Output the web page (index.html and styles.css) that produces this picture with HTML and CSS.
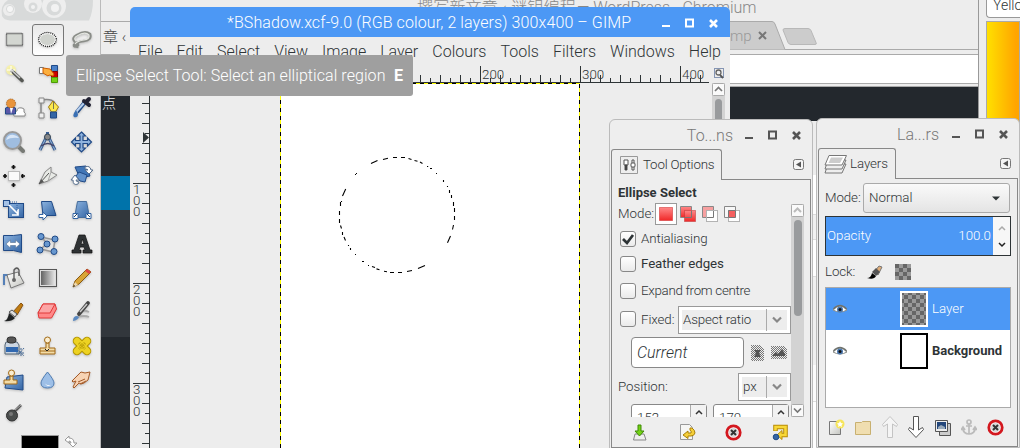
FILE: index.html
```html
<!DOCTYPE html>
<html lang="en">
<head>
<meta charset="utf-8">
<title>GIMP</title>
<link rel="stylesheet" href="styles.css">
</head>
<body>
<svg width="0" height="0" class="defs" aria-hidden="true">
  <defs>
    <linearGradient id="blue" x1="0" y1="0" x2="1" y2="1"><stop offset="0" stop-color="#8db4e0"/><stop offset="1" stop-color="#3465a4"/></linearGradient>
    <linearGradient id="grey" x1="0" y1="0" x2="1" y2="0"><stop offset="0" stop-color="#555"/><stop offset="1" stop-color="#f4f4f4"/></linearGradient>
    <linearGradient id="soft" x1="0" y1="0" x2="1" y2="1"><stop offset="0" stop-color="#fff"/><stop offset="1" stop-color="#c4c5c0"/></linearGradient>
    <linearGradient id="red" x1="0" y1="0" x2="0" y2="1"><stop offset="0" stop-color="#f88"/><stop offset="1" stop-color="#f02828"/></linearGradient>
    <pattern id="check" width="8" height="8" patternUnits="userSpaceOnUse"><rect width="8" height="8" fill="#999"/><path d="M0 0h4v4H0zM4 4h4v4H4z" fill="#666"/></pattern>
    <pattern id="dots" width="2" height="2" patternUnits="userSpaceOnUse"><path d="M0 0h1v1H0zM1 1h1v1H1z" fill="#777"/></pattern>
    <pattern id="hticks" width="100" height="17" patternUnits="userSpaceOnUse" x="30"><path d="M.5 0V17M10.5 12v5M20.5 9v8M30.5 12v5M40.5 9v8M50.5 12v5M60.5 9v8M70.5 12v5M80.5 9v8M90.5 12v5" stroke="#2e3436"/></pattern>
    <pattern id="vticks" width="20" height="100" patternUnits="userSpaceOnUse" y="0"><path d="M3 .5H20M15 10.5h5M12 20.5h8M15 30.5h5M12 40.5h8M15 50.5h5M12 60.5h8M15 70.5h5M12 80.5h8M15 90.5h5" stroke="#2e3436"/></pattern>
    <g id="stop"><circle cx="8.500" cy="8.500" r="6.700" fill="#fff" stroke="#d3181f" stroke-width="2.800"/><circle cx="8.500" cy="8.500" r="4.600" fill="#d8d8d8"/><path d="M6 6l5 5M11 6l-5 5" stroke="#333" stroke-width="2"/></g>
    <g id="eye"><path d="M1 7Q8-1 15 7Q8 11 1 7z" fill="#fff" stroke="#8a8d88"/><path d="M1.500 6Q8-1 14.500 6" fill="none" stroke="#70736e" stroke-width="1.600"/><circle cx="8" cy="6.500" r="3" fill="#4a78b0"/><circle cx="8" cy="6.500" r="1.500" fill="#111"/></g>
    <g id="winbtns" fill="none" stroke="currentColor" stroke-width="2"><path d="M0 10h8M31 3.500h-7v7h7z" stroke-width="2"/><path d="M48 4l7 7M55 4l-7 7" stroke-width="2.600"/></g>
    <g id="menuarrow"><rect x=".5" y=".5" width="10" height="10" rx="2" fill="#f5f5f5" stroke="#777"/><path d="M8 2.500v6L3 5.500z" fill="#555"/></g>
  </defs>
</svg>

<div class="desktop">
  <section class="browser">
    <div class="browser-title"><span class="cjk">撰写新文章 ‹ 谜钥编程</span><span>— WordPress - Chromium</span></div>
    <div class="tabs">
      <span class="tab-left">章 ‹</span>
      <span class="tab-right">mp</span>
      <svg class="tab-shapes" width="110" height="29"><path d="M0 .500H42Q44 .500 45 3L55 28.500H0z" fill="#ccc"/><path d="M0 .500H42Q44 .500 45 3L55 28.500" fill="none" stroke="#aaa"/><path d="M29 11l7 7M36 11l-7 7" stroke="#777" stroke-width="2"/><path d="M55 7.500h23q2 0 3 2l5 12q1 2-1 2H61q-2 0-3-2L53 9q0-1.500 2-1.500z" fill="#ccc" stroke="#b8b8b8"/></svg>
    </div>
    <div class="address"></div>
    <div class="page"><div class="page-strip"><span>点</span><i></i><b></b></div><div class="page-cards"></div></div>
  </section>

  <aside class="gradient-panel"><div class="combo-cut">Yello</div><div class="gradient"></div></aside>

  <section class="toolbox">
    <svg class="wilber" width="96" height="21"><path d="M2 16Q0 5 8 0H93Q93 12 89 20.500H10Q4 20 2 16z" fill="#d8dada"/><circle cx="9" cy="10" r="6" fill="#ededed"/><circle cx="10" cy="9" r="3.600" fill="#f6f6f6" stroke="#d8dada"/><circle cx="33" cy="4" r="9" fill="#eee"/><circle cx="33" cy="7" r="4.500" fill="#d8dada"/><circle cx="33" cy="7" r="2" fill="#f2f2f2"/><circle cx="54" cy="6" r="12" fill="#eee"/><circle cx="54" cy="8" r="7.500" fill="#d8dada"/><circle cx="55" cy="8" r="4" fill="#f2f2f2"/></svg>
    <div class="tools">
      <div class="tool"><svg><rect x="4.500" y="5.500" width="16" height="12" fill="#d3d6d1"/><rect x="4.500" y="5.500" width="16" height="12" fill="none" stroke="#fff"/><rect x="4.500" y="5.500" width="16" height="12" fill="none" stroke="#111" stroke-width="1.300" stroke-dasharray="1 1"/></svg></div>
      <div class="tool"><span class="active"><svg><ellipse cx="11.500" cy="11.500" rx="8.800" ry="7" fill="#fff" stroke="#111" stroke-width="1.300" stroke-dasharray="1 1"/><ellipse cx="11.500" cy="11.500" rx="7.500" ry="5.500" fill="#cfd2cd"/></svg></span></div>
      <div class="tool"><svg><g fill="none"><path d="M5 14Q1 10 7 7Q15 2 20 6Q22 12 14 13Q6 14 4 17Q4 20 8 17Q8 14 5 15M8 14l-1 6" stroke="#8a8d88" stroke-width="2.600"/><path d="M6 13Q3 10 7 8Q15 3 19 7Q20 11 14 12Q7 13 5 16" stroke="#e4e6e1" stroke-width="1.200"/></g></svg></div>

      <div class="tool"><svg><circle cx="9" cy="8" r="5" fill="#fcf6a0" opacity=".8"/><path d="M10 9L20 18.500" stroke="#555753" stroke-width="3.600" stroke-linecap="round"/><path d="M10 8.500l8 7.500" stroke="#ccc" stroke-width="1.500"/><path d="M9 4v8M5 8h8" stroke="#fff"/></svg></div>
      <div class="tool"><svg><path d="M15.500 3.500h6v6h-6z" fill="#4a80c8" stroke="#204a87"/><path d="M15.500 9.500h6v6h-6z" fill="#cc0000" stroke="#800"/><path d="M15.500 15.500h6v5h-6z" fill="#73d216" stroke="#4e9a06"/><path d="M3.500 5.500h4v6h-4z" fill="#fff" stroke="#777"/><path d="M7 6l7 1 4 5-1 2-4-1-1 1-5-3z" fill="#fcaf3e" stroke="#ce5c00"/></svg></div>
      <div class="tool"></div>

      <div class="tool"><svg><path d="M12 20q-2-4 3-5q0-4 5-3q3 0 2 4q2 1 1 4z" fill="#fff" stroke="#888"/><path d="M3.500 18V12q5-3 10 0v6z" fill="#5b58a8" stroke="#204a87"/><circle cx="9" cy="7.500" r="4.500" fill="#e8943c" stroke="#a65a12" stroke-dasharray="1 1"/><path d="M8 12l1 6 2-6z" fill="#fff"/></svg></div>
      <div class="tool"><svg><path d="M5 4v16M5 4q14-2 14 5" fill="none" stroke="#888" stroke-width="1.500"/><path d="M3 2h5v5H3zM3 17h5v5H3z" fill="#eee" stroke="#888"/><path d="M17 5l-4.500 6 3 5h4l3-5z" fill="#fce94f" stroke="#a07c10"/><path d="M17.500 6v7" stroke="#775"/><path d="M14.500 16h6v6h-6z" fill="#3465a4" stroke="#204a87"/></svg></div>
      <div class="tool"><svg><path d="M15 6l-8 10" stroke="#204a87" stroke-width="4"/><path d="M14 7l-8 9" stroke="#b8d0ee" stroke-width="2"/><path d="M14 5l5 4M16 6l3-3" stroke="#223" stroke-width="4" stroke-linecap="round"/><path d="M6 14q-4 5-2 7 4 1 4-3z" fill="#3a70b4"/></svg></div>

      <div class="tool"><svg><path d="M15 15l6 6" stroke="#777a75" stroke-width="4" stroke-linecap="round"/><circle cx="10.500" cy="10.500" r="8.500" fill="#9fbde0" stroke="#999" stroke-width="2"/><path d="M4 10q2-6 8-5 4 1 5 3-8-1-13 2z" fill="#d8e6f6"/></svg></div>
      <div class="tool"><svg><path d="M11.500 2v4M10 8L4 20M13 8l6 12" stroke="#3a5f94" stroke-width="3"/><path d="M10 8L4 20M13 8l6 12" stroke="#9db9db"/><path d="M5 16q7-5 13 0" fill="none" stroke="#446" stroke-width="1.500"/><circle cx="11.500" cy="7" r="3" fill="#888" stroke="#345"/></svg></div>
      <div class="tool"><svg><path d="M11.500 2l4 4h-2.500v4.500h4.500V8l4 4-4 4v-2.500h-4.500v4.500h2.500l-4 4-4-4h2.500v-4.500h-4.500V16l-4-4 4-4v2.500h4.500V6h-2.500z" fill="#8fb3de" stroke="#204a87" stroke-width="1.200"/></svg></div>

      <div class="tool"><svg><rect x="6.500" y="7.500" width="11" height="9" fill="#fafafa" stroke="#bbb"/><path d="M11.500 1v4M9.500 3h4M11.500 19v4M9.500 21h4M1 12h4M3 10v4M19 12h4M20.500 10v4" stroke="#111" stroke-width="1.700"/></svg></div>
      <div class="tool"><svg><path d="M3 20L9 8l6-5v5l6 3-9 6z" fill="#e8eae6" stroke="#888"/><path d="M15 8l-3 9" stroke="#aaa"/><path d="M3 20L13 9" stroke="#555"/><path d="M3 20l2-5 3 3z" fill="#555"/></svg></div>
      <div class="tool"><svg><path d="M5 3l11-1 4 10-10 2z" fill="#4176b7" stroke="#204a87"/><path d="M9 8l8 3-2 7-5-1-4-5z" fill="#6392cb" stroke="#204a87"/><path d="M15 3q5-2 6 3h2l-4 4-4-4h3q0-1-3-1zM8 20q-5 2-5-4H1l4-5 4 5H6q0 2 3 2z" fill="#fff" stroke="#58708f"/></svg></div>

      <div class="tool"><svg><rect x="6.500" y="5.500" width="15" height="14" fill="url(#blue)" stroke="#204a87"/><rect x="1.500" y="2.500" width="6" height="6" fill="#a5c3e8" stroke="#204a87"/><path d="M7 7l9 9M16 11v6h-6" stroke="#fff" stroke-width="1.700" fill="none"/><path d="M8 4h7v8" fill="none" stroke="#3465a4" stroke-dasharray="1 1"/></svg></div>
      <div class="tool"><svg><path d="M5.500 3.500h10l4.500 14h-13z" fill="url(#blue)" stroke="#204a87"/><path d="M3 16.500h4V14l4 4-4 4v-2.500H3z" fill="#fff" stroke="#3465a4"/></svg></div>
      <div class="tool"><svg><path d="M7.500 3.500h9l3 16h-15z" fill="url(#blue)" stroke="#466d9c"/><path d="M3 15.500h5v5H3zM16 15.500h5v5h-5z" fill="#fff" stroke="#3465a4"/><path d="M4 19l3-3M20 19l-3-3" stroke="#246"/></svg></div>

      <div class="tool"><svg><path d="M1.500 3.500h10l8-1v18l-8-2h-10z" fill="url(#blue)" stroke="#204a87"/><path d="M4 12l4.500-4v2.500h5V8l4.500 4-4.500 4v-2.500h-5V16z" fill="#fff" stroke="#58708f" stroke-width=".6"/></svg></div>
      <div class="tool"><svg><path d="M5 5l14 3-2 12-12-3 6-6z" fill="none" stroke="#999" stroke-width="1.500"/><g fill="#6898d0" stroke="#204a87"><circle cx="5" cy="4.500" r="3"/><circle cx="19" cy="7" r="3"/><circle cx="11" cy="12" r="3"/><circle cx="4" cy="18" r="3"/><circle cx="18" cy="19.500" r="3"/></g></svg></div>
      <div class="tool"><svg><path d="M2 21v-3h2L9 3h6l5 15h2v3h-9v-3h2l-1-3h-4l-1 3h2v3zM11 12h3l-1.500-5z" fill="#2e3234" stroke="#111" stroke-width=".7"/></svg></div>

      <div class="tool"><svg><path d="M2 19V9h5" fill="none" stroke="#5580b8" stroke-width="2"/><path d="M5 9l11-3 6 11-13 5z" fill="url(#soft)" stroke="#777"/><path d="M12 14V4q3-4 5 0v6" fill="none" stroke="#555" stroke-width="1.300"/><circle cx="12" cy="14" r="2" fill="#666"/></svg></div>
      <div class="tool"><svg><rect x="3.500" y="3.500" width="17" height="17" fill="url(#grey)" stroke="#555"/><rect x="4.500" y="4.500" width="15" height="15" fill="none" stroke="#ddd"/></svg></div>
      <div class="tool"><svg><path d="M3 21l2-6L17 3l4 3L9 18z" fill="#d8a437" stroke="#8a5a12"/><path d="M3 21l2-5 3 3z" fill="#edd9b0"/><path d="M3 21l1-2 1 1z" fill="#000"/><path d="M15 5l2-2 4 3-2 2z" fill="#d44"/></svg></div>

      <div class="tool"><svg><path d="M11 12l8-9 2 2-6 10z" fill="#c17d11" stroke="#8a5310"/><path d="M7 12l3-2 5 4-2 3z" fill="#ddd" stroke="#555"/><path d="M2 21q4-1 5-8l6 5q-4 4-11 3z" fill="#202324"/></svg></div>
      <div class="tool"><svg><path d="M7 4h12l1.500 5-5 9H3l-1-5z" fill="#f88" stroke="#e03838"/><path d="M7 4h12l-5 9H2z" fill="#fba5a5" stroke="#e03838"/></svg></div>
      <div class="tool"><svg><path d="M7 17q8-2 12 0M9 13q4-4 10-1" fill="none" stroke="#aaa" stroke-width="1.800"/><path d="M9 14L18 3" stroke="#444" stroke-width="3.600" stroke-linecap="round"/><path d="M10 12l7-8" stroke="#ccc" stroke-width="1.500"/><path d="M3 21q0-5 4-5l2 1q-1 3-6 4z" fill="#5a88c0"/></svg></div>

      <div class="tool"><svg><path d="M4 8h11l2 3v9H3v-9z" fill="#ccd6e2" stroke="#567"/><path d="M4 13h12v5H4z" fill="#3068b0"/><rect x="5" y="3" width="9" height="6" rx="3" fill="#555" stroke="#333"/><path d="M15 15l7 7M22 14l-6 7M14 19h9M19 14v8" stroke="#446894" stroke-dasharray="2 1"/></svg></div>
      <div class="tool"><svg><path d="M10 9h3v5h6v6H4v-6h6z" fill="#f3dca7" stroke="#a26b18"/><circle cx="11.500" cy="6" r="3" fill="#fbeed0" stroke="#a26b18"/><path d="M4 17h15" stroke="#a26b18"/><path d="M9 15l2 2 2-2" stroke="#222" fill="none"/></svg></div>
      <div class="tool"><svg><path d="M7 7l10 10M17 7L7 17" stroke="#b29403" stroke-width="8.500" stroke-linecap="round"/><path d="M7 7l10 10M17 7L7 17" stroke="#edd222" stroke-width="6.500" stroke-linecap="round"/><path d="M9 9l6 6M15 9l-6 6" stroke="#bda20b" stroke-dasharray="1 1" stroke-width="3"/></svg></div>

      <div class="tool"><svg><path d="M5 9l16-2v15L3 20z" fill="url(#blue)" stroke="#204a87"/><path d="M8 8h3v4h4v4H2v-4h6z" fill="#f3dca7" stroke="#a26b18"/><circle cx="9.500" cy="5" r="3" fill="#fbeed0" stroke="#a26b18"/></svg></div>
      <div class="tool"><svg><path d="M11.500 4Q5 12 5 15q0 5 6.500 5T18 15q0-3-6.500-11z" fill="#9dbfe7" stroke="#4f7cb2"/><path d="M8 14q2 4 7 3-4 3-7-3z" fill="#fff"/></svg></div>
      <div class="tool"><svg><path d="M5 10l6-6 4 1 5-1-2 8-4 3-3 1-2-1-5 5-1-1 3-6-3 1-1-1z" fill="#f7d3b4" stroke="#a45a28"/><path d="M8 14l7-3M10 16l6-3" stroke="#a45a28"/></svg></div>

      <div class="tool"><svg><path d="M12 10l7-7" stroke="#555" stroke-width="2.600"/><path d="M13 8l6-5" stroke="#aaa"/><circle cx="10" cy="13.500" r="5.500" fill="#4a4d4c" stroke="#333"/><circle cx="9" cy="12" r="2" fill="#777"/></svg></div>
    </div>
    <div class="colours"><div class="fg"></div><svg width="14" height="12"><path d="M1 5l4-4v2q5 0 5 5h3l-4 4-4-4h2q0-2-2-2v2z" fill="#fff" stroke="#999"/></svg></div>
  </section>

  <section class="image-window">
    <header class="title-active"><span>*BShadow.xcf-9.0 (RGB colour, 2 layers) 300x400 – GIMP</span><svg width="57" height="15"><use href="#winbtns"/></svg></header>
    <nav class="menubar"><span>File</span><span>Edit</span><span>Select</span><span>View</span><span>Image</span><span>Layer</span><span>Colours</span><span>Tools</span><span>Filters</span><span>Windows</span><span>Help</span></nav>
    <div class="work">
      <div class="corner"></div>
      <svg class="hruler" width="559" height="17"><rect width="559" height="17" fill="url(#hticks)"/><path d="M0 16.500h559" stroke="#2e3436"/><text x="332" y="13">200</text><text x="432" y="13">300</text><text x="532" y="13">400</text></svg>
      <svg class="zoomfit" width="22" height="17"><rect x="5.500" y="2.500" width="9" height="9" fill="none" stroke="#1d3c78" stroke-dasharray="1 1"/><circle cx="9.500" cy="6.500" r="2.500" fill="#eee" stroke="#666" stroke-width="1.300"/><path d="M11 9l3 3" stroke="#555" stroke-width="1.800"/></svg>
      <svg class="vruler" width="20" height="365"><rect width="20" height="365" fill="url(#vticks)"/><path d="M19.500 0V365" stroke="#2e3436"/><path d="M13 49v11l6-5.500z" fill="#2e3436"/><text><tspan x="3" y="111">1</tspan><tspan x="3" y="122">0</tspan><tspan x="3" y="133">0</tspan><tspan x="3" y="211">2</tspan><tspan x="3" y="222">0</tspan><tspan x="3" y="233">0</tspan><tspan x="3" y="311">3</tspan><tspan x="3" y="322">0</tspan><tspan x="3" y="333">0</tspan></text></svg>
      <div class="canvas">
        <svg width="300" height="365" viewBox="280 83 300 365">
          <path fill="#fff" d="M280 83h300v365H280z"/>
          <path d="M280.500 448V83.500H579.500V448" fill="none" stroke="#ff0"/>
          <path d="M280.500 448V83.500H579.500V448" fill="none" stroke="#000" stroke-dasharray="4 4"/>
          <path fill="none" stroke="#000" stroke-width="1.100" d="M371 163.500L377.500 160.500M383 159.500L388 158.300M393 157.500h4M401 157.500h4M408.500 158.500l3 1M414.500 160.500l3 .8M420 162l2.500 1.500M427 166.500h1.200M430 168.500h2M436 173.500h1M443.500 180v2M447.500 186v1M449.500 190v3M451.500 195v3M453.500 202v4M454.500 208v4M454.500 216v4M453.500 225l-1 4.500M450.500 236L447.500 242.700M425 265.500L418 268.500M412 270.500l-5 1M402 272.500h-4M394 272.500h-4M387 271.800l-3-.5M379.500 269.700l-3-.8M375 267.500l-3-1M368 265.500h1M362 261.500h2M355 254.500h1M350.500 248v2M348.500 245v1M345.500 240.500l-1.500-3.500M342.500 235v-3M341.500 228.500l-1-3M339.500 223v-4M339.500 215v-4M340.500 206v-4M341.500 201v1M342.500 196L345.700 189M355 174.500h1M356 173.500h1"/>
        </svg>
      </div>
      <div class="vscroll"><svg width="13" height="13"><rect x=".5" y=".5" width="12" height="12" rx="1" fill="#fafafa" stroke="#aaa"/><path d="M3 8l3.500-3.500L10 8" fill="none" stroke="#777" stroke-width="1.700"/></svg><div class="thumb"></div></div>
    </div>
  </section>

  <div class="tooltip"><span>Ellipse Select Tool: Select an elliptical region</span><b>E</b></div>

  <section class="dock options">
    <header class="title-idle"><span>To...ns</span><svg width="57" height="15"><use href="#winbtns"/></svg></header>
    <div class="dock-frame">
      <div class="tab-row"><div class="dock-tab"><svg width="18" height="18"><path d="M.5 .5h17v17H.5z" fill="#eee" stroke="#999"/><path d="M4 4h4v5H4zM5 9h2v5H5zM12 4h2v10h-2z" fill="#fff" stroke="#555"/><path d="M5 9h2v5H5z" fill="#444"/><rect x="11" y="7" width="4" height="4" rx="1" fill="#fff" stroke="#555"/></svg><span>Tool Options</span></div><div class="tab-rest"><svg width="11" height="11"><use href="#menuarrow"/></svg></div></div>
      <div class="dock-body">
        <div class="options-view">
          <div class="options-list">
            <h2>Ellipse Select</h2>
            <div class="mode-row"><span>Mode:</span>
              <div class="mode-on"><svg width="14" height="14"><rect x=".5" y=".5" width="13" height="13" fill="url(#red)" stroke="#c22" stroke-dasharray="1 1"/></svg></div>
              <svg width="17" height="17"><path d="M.5 .5h11v11H.500z" fill="url(#red)" stroke="#888"/><path d="M4.500 4.500h11v11h-11z" fill="url(#red)" stroke="#b33" stroke-dasharray="1 1"/><path d="M5 11.500h6.500V5" fill="none" stroke="#777"/></svg>
              <svg width="17" height="17"><path d="M.5 .5h11v11H.500z" fill="#f7a0a0" stroke="#888"/><path d="M4.500 4.500h11v11h-11z" fill="#fff" stroke="#fff"/><path d="M4.500 4.500h11v11h-11z" fill="none" stroke="#666" stroke-dasharray="1 1"/><path d="M5 11.500h6.500V5" fill="none" stroke="#777"/></svg>
              <svg width="17" height="17"><path d="M.5 .5h11v11H.500z" fill="#f7f7f7" stroke="#888"/><path d="M4.500 4.500h11v11h-11z" fill="#fff" stroke="#fff"/><path d="M4.500 4.500h11v11h-11z" fill="none" stroke="#666" stroke-dasharray="1 1"/><path d="M4.500 4.500h7v7h-7z" fill="#f46060" stroke="#777"/></svg>
            </div>
            <div class="check-row c1"><i><svg width="14" height="14"><path d="M2 7l4 4 6-8" fill="none" stroke="#2e3436" stroke-width="2.700"/></svg></i><span>Antialiasing</span></div>
            <div class="check-row c2"><i></i><span>Feather edges</span></div>
            <div class="check-row c3"><i></i><span>Expand from centre</span></div>
            <div class="fixed-row"><div class="check-row"><i></i><span>Fixed:</span></div><div class="combo aspect"><span>Aspect ratio</span><em><svg width="10" height="8"><path d="M1 1.500l4 4 4-4" fill="none" stroke="#888" stroke-width="2.200"/></svg></em></div></div>
            <div class="current-row"><div class="entry">Current</div><svg width="13" height="16"><path d="M0 0h9l4 4v12H0z" fill="url(#dots)"/><path d="M3 5h7l-2 3 2 4H3l2-4z" fill="#555"/></svg><svg width="16" height="13"><path d="M0 0h13l3 3v10H0z" fill="url(#dots)"/><path d="M2 9l3-3 2 2 4-5 3 5v2H2z" fill="#555"/></svg></div>
            <div class="position-row"><span>Position:</span><div class="combo px"><span>px</span><em><svg width="10" height="8"><path d="M1 1.500l4 4 4-4" fill="none" stroke="#888" stroke-width="2.200"/></svg></em></div></div>
            <div class="spin-row"><div class="spin"><span>152</span><em><svg width="8" height="6"><path d="M1 5l3-3 3 3" fill="none" stroke="#333" stroke-width="1.500"/></svg></em></div><div class="spin"><span>170</span><em><svg width="8" height="6"><path d="M1 5l3-3 3 3" fill="none" stroke="#333" stroke-width="1.500"/></svg></em></div></div>
          </div>
          <div class="oscroll"><svg width="13" height="13"><rect x=".5" y=".5" width="12" height="12" rx="1" fill="#fafafa" stroke="#aaa"/><path d="M3 8l3.500-3.500L10 8" fill="none" stroke="#bbb" stroke-width="2"/></svg><div class="thumb"></div><svg width="13" height="13"><rect x=".5" y=".5" width="12" height="12" rx="1" fill="#fafafa" stroke="#aaa"/><path d="M3 4.500L6.500 8 10 4.500" fill="none" stroke="#777" stroke-width="1.700"/></svg></div>
        </div>
        <footer class="option-actions">
          <svg width="17" height="17"><path d="M3 10h9l2 6H1.500z" fill="#eee" stroke="#888"/><path d="M6 1h3v6h3l-4.500 5L3 7h3z" fill="#73d216" stroke="#3f8a04"/></svg>
          <svg width="17" height="17"><path d="M1.500 .5h9l3 3v12h-12z" fill="#f6f6f4" stroke="#999"/><path d="M11 4h2q3 2 3 5-1 3-4 3H9v2.500L4 11l5-4v2h3q1-1-1-3z" fill="#f5cf3a" stroke="#a98008"/></svg>
          <svg width="17" height="17"><use href="#stop"/></svg>
          <svg width="17" height="17"><path d="M3.500 7V3h10v8H8" fill="none" stroke="#b88d08" stroke-width="4.600"/><path d="M10 6.500v9L5 11z" fill="#f8d838" stroke="#b88d08"/><path d="M3.500 6.500V3h10v8H8" fill="none" stroke="#f8d838" stroke-width="2.600"/><circle cx="4" cy="13" r="2.800" fill="#3465a4" stroke="#204a87"/></svg>
        </footer>
      </div>
    </div>
  </section>

  <section class="dock layers">
    <header class="title-idle"><span>La...rs</span><svg width="57" height="15"><use href="#winbtns"/></svg></header>
    <div class="dock-frame">
      <div class="tab-row"><div class="dock-tab"><svg width="24" height="20"><g fill="#eee" stroke="#777"><path d="M4 10h18l-4 9H1z"/><path d="M4 6h18l-4 9H1z"/><path d="M5 1.500h17.500L18 11H1z" fill="#fff"/></g><path d="M7 3.500h12L16 9H4.500z" fill="#ccc"/></svg><span>Layers</span></div><div class="tab-rest"><svg width="11" height="11"><use href="#menuarrow"/></svg></div></div>
      <div class="dock-body">
        <div class="blend-row"><span>Mode:</span><div class="dropdown"><span>Normal</span><svg width="8" height="5"><path d="M0 .5h8L4 4.500z" fill="#2e3436"/></svg></div></div>
        <div class="opacity"><div><span>Opacity</span><span>100.0</span></div><em><svg width="8" height="24"><path d="M1 6l3-3 3 3" fill="none" stroke="#aaa" stroke-width="1.500"/><path d="M1 19l3 3 3-3" fill="none" stroke="#222" stroke-width="1.500"/></svg></em></div>
        <div class="lock-row"><span>Lock:</span><svg width="16" height="16"><path d="M7 8l5-6 3 1-4 8z" fill="#e0ad78" stroke="#777"/><path d="M0 14q4 0 5-5l4 3q-2 4-9 2z" fill="#000"/><path d="M5 8l4-4 4 4-4 4z" fill="#555"/></svg><svg width="16" height="16"><rect width="16" height="16" fill="url(#check)"/></svg></div>
        <div class="layer-list">
          <div class="layer on"><svg width="16" height="12"><use href="#eye"/></svg><svg class="thumbnail" width="28" height="36"><rect x="1" y="1" width="26" height="34" fill="url(#check)" stroke="#fff" stroke-width="2"/></svg><span>Layer</span></div>
          <div class="layer bg"><svg width="16" height="12"><use href="#eye"/></svg><svg class="thumbnail" width="28" height="36"><rect x="1" y="1" width="26" height="34" fill="#fff" stroke="#000" stroke-width="2"/></svg><b>Background</b></div>
        </div>
        <footer class="layer-actions">
          <svg width="17" height="17"><path d="M1.500 2.500h11v13h-11z" fill="url(#soft)" stroke="#777"/><circle cx="12" cy="5" r="4.500" fill="#f6e55a"/><path d="M12 2l1 2 2 .5-1.500 1.500.5 2-2-1-2 1 .5-2L9 4.500l2-.5z" fill="#fff"/></svg>
          <svg width="17" height="17"><path d="M.5 15.500v-12h6l1-1h8v13z" fill="#f0deb0" stroke="#c8b070"/></svg>
          <svg width="16" height="22"><path d="M8 .5l7.500 8-1 2-4-2.500v13.500h-5V8l-4 2.500-1-2z" fill="#f5f5f5" stroke="#c4c4c4"/></svg>
          <svg width="16" height="22"><path d="M8 21.500l7.500-8-1-2-4 2.500V.5h-5V14l-4-2.500-1 2z" fill="#fff" stroke="#555"/></svg>
          <svg width="16" height="17"><path d="M4.500 4.500h11v12h-11z" fill="#ccc" stroke="#555"/><path d="M.5 1.500h12v11H.500z" fill="#eee" stroke="#555"/><path d="M2 3h9v7H2z" fill="#24477b"/><path d="M3 8l3-2 4 2v2H3z" fill="#9ab"/></svg>
          <svg width="16" height="17"><g fill="none" stroke="#bbb" stroke-width="1.700"><circle cx="8" cy="3" r="2"/><path d="M8 5v10M5 7h6M1.500 9q1 6 6.500 6t6.500-6M0 11l2-3 2 3M12 11l2-3 2 3"/></g></svg>
          <svg width="17" height="17"><use href="#stop"/></svg>
        </footer>
      </div>
    </div>
  </section>
</div>
</body>
</html>
```
FILE: styles.css
```css
* { box-sizing: border-box; }
body { margin: 0; font: 300 13.33px/16px Roboto, "Noto Sans CJK SC", sans-serif; color: #2e3436; }
svg { display: block; flex: none; }
i, em { font-style: normal; }
.defs { position: absolute; }
.desktop { position: relative; width: 1020px; height: 448px; overflow: hidden; background: #ededed; }

.browser { position: absolute; left: 101px; top: 0; width: 878px; height: 448px; display: flex; flex-direction: column; border-right: 1px solid #999; background: #ededed; }
.browser-title { height: 21px; flex: none; display: flex; gap: 1px; padding-left: 316px; font-size: 16px; line-height: 15px; color: #888; white-space: nowrap; }
.cjk { letter-spacing: .2px; }
.tabs { height: 29px; flex: none; display: flex; align-items: flex-start; border-bottom: 1px solid #aaa; position: relative; }
.tab-left { width: 29px; height: 34px; padding: 4px 0 0 2px; border-top: 1px solid #aaa; border-bottom: 1px solid #aaa; font-size: 15px; line-height: 22px; color: #444; white-space: nowrap; background: #ededed; }
.tab-right { position: absolute; left: 629px; top: 5px; z-index: 1; font-size: 15px; line-height: 20px; color: #999; }
.tab-shapes { margin-left: 600px; }
.address { height: 37px; flex: none; border-bottom: 1px solid #aaa; padding-top: 4px; }
.address::before { content: ""; display: block; height: 28px; background: #fff; border: solid #aaa; border-width: 1px 0; }
.page { flex: 1; display: flex; justify-content: space-between; background: #23282d; }
.page-strip { width: 29px; display: flex; flex-direction: column; }
.page-strip span { height: 89px; padding: 8px 0 0 1px; color: #eee; font-size: 14px; }
.page-strip i { height: 34px; background: #0073aa; }
.page-strip b { height: 127px; background: #32373c; }
.page-cards { width: 12px; margin: 34px 157px 0 0; background: linear-gradient(#ededed 54px, #fff 54px 93px, #ddd 93px 94px, #f1f1f1 94px 118px, #ddd 118px 119px, #fff 119px 155px, #ddd 155px 156px, #f1f1f1 156px 244px, #fcfcfc 244px 280px, #ddd 280px 281px, #fff 281px); }

.gradient-panel { position: absolute; left: 980px; top: 0; width: 40px; height: 130px; padding-left: 6px; background: #ededed; }
.combo-cut { height: 18px; padding-left: 6px; line-height: 10px; font-size: 14px; border: 1px solid #999; border-width: 0 0 1px 1px; border-radius: 0 0 0 4px; background: #fff; overflow: hidden; }
.gradient { height: 108px; margin-top: 3px; border: 1px solid #aaa; background: linear-gradient(90deg, #ffe000, #ffa500 90%); }

.toolbox { position: absolute; left: 0; top: 0; width: 101px; height: 448px; background: #ededed; border-right: 1px solid #bbb; overflow: hidden; }
.wilber { height: 21px; margin-bottom: 2px; }
.tools { display: grid; grid-template-columns: repeat(3, 34px); grid-auto-rows: 34px; margin-left: -3px; }
.tool { display: flex; align-items: center; justify-content: center; }
.tool svg { width: 24px; height: 24px; filter: drop-shadow(0 1px 1px #0003); }
.active { width: 32px; height: 32px; display: flex; align-items: center; justify-content: center; border: 1px solid #777; border-radius: 3px; background: linear-gradient(#e8e8e8, #fff); }
.colours { display: flex; gap: 5px; margin: 4px 0 0 21px; }
.fg { width: 38px; height: 24px; background: #000; border: solid #999; border-width: 1px 1px 0; }

.image-window { position: absolute; left: 130px; top: 7px; width: 600px; height: 441px; display: flex; flex-direction: column; background: #ededed; border-radius: 5px 5px 0 0; overflow: hidden; }
.title-active { height: 30px; flex: none; display: flex; align-items: center; justify-content: space-between; padding: 2px 11px 0 97px; color: #fff; background: #4c98f5; font-size: 16px; letter-spacing: .1px; white-space: nowrap; }
.menubar { height: 29px; flex: none; padding: 0 9px 0 8px; display: flex; justify-content: space-between; align-items: center; font-size: 16px; }
.work { flex: 1; display: grid; grid-template-columns: 20px 559px 21px; grid-template-rows: 17px 365px; }
.hruler text, .vruler text { font: 300 13.33px Roboto, sans-serif; fill: #2e3436; }
.canvas { padding-left: 130px; }
.vscroll { margin: 0 5px 0 3px; display: flex; flex-direction: column; align-items: center; background: #d3d3d3; }
.vscroll .thumb { flex: 1; width: 7px; margin-top: 3px; border-radius: 4px 4px 0 0; background: #999b9d; }

.tooltip { position: absolute; left: 66px; top: 55px; width: 347px; height: 41px; padding: 0 10px; display: flex; align-items: center; justify-content: space-between; background: #9f9f9f; border-radius: 3px; color: #fff; font-size: 16px; letter-spacing: .07px; white-space: nowrap; }
.tooltip b { font-weight: 700; }

.dock { position: absolute; width: 204px; display: flex; flex-direction: column; background: #eeeeee; border: 1px solid #bbb; border-radius: 6px 6px 0 0; white-space: nowrap; }
.options { left: 609px; top: 119px; height: 330px; }
.layers { left: 816px; top: 118px; height: 330px; }
.title-idle { height: 29px; flex: none; display: flex; align-items: center; justify-content: flex-end; gap: 12px; padding: 2px 10px 0 0; font-size: 16px; color: #777; }
.title-idle svg { color: #555; }
.layers .title-idle { gap: 13px; }
.dock-frame { flex: 1; display: flex; flex-direction: column; margin: 0 1px; min-height: 0; }
.tab-row { display: flex; height: 31px; flex: none; }
.dock-tab { display: flex; align-items: center; gap: 5px; padding: 0 8px; border: 1px solid #888; border-bottom: 0; border-radius: 3px 3px 0 0; }
.options .dock-tab { width: 111px; letter-spacing: -.2px; }
.layers .dock-tab { width: 78px; padding-left: 5px; gap: 2px; letter-spacing: -.1px; }
.tab-rest { flex: 1; display: flex; align-items: center; justify-content: flex-end; padding-right: 7px; border-bottom: 1px solid #888; }
.dock-body { flex: 1; min-height: 0; display: flex; flex-direction: column; border: solid #888; border-width: 0 1px 1px; }

.options-view { height: 237px; display: flex; overflow: hidden; }
.options-list { width: 180px; flex: none; padding-left: 6px; }
h2 { margin: 5px 0 0; font: 700 13px/16px Roboto, sans-serif; }
.mode-row { display: flex; align-items: center; gap: 5px; height: 24px; margin-top: 1px; }
.mode-row > span { width: 32px; }
.mode-on { width: 22px; height: 22px; margin-right: -2px; display: grid; place-items: center; border: 1px solid #999; background: #fff; }
.check-row { display: flex; align-items: center; gap: 5px; height: 16px; padding-left: 2px; letter-spacing: -.1px; }
.check-row i { width: 16px; height: 16px; border: 1px solid #888; border-radius: 3px; background: linear-gradient(#fff, #eaeaea); }
.c1 { margin-top: 5px; }
.c2 { margin-top: 9px; font-weight: 400; }
.c3 { margin-top: 11px; letter-spacing: -.3px; }
.fixed-row { display: flex; justify-content: space-between; margin-top: 7px; }
.fixed-row .check-row { margin-top: 5px; }
.fixed-row .check-row span { padding-top: 2px; }
.combo { height: 28px; display: flex; align-items: center; justify-content: space-between; border: 1px solid #999; padding: 4px; background: #ededed; box-shadow: inset 0 0 0 3px #fff; }
.combo em { width: 20px; height: 22px; display: grid; place-items: center; border-left: 1px solid #aaa; }
.aspect { width: 113px; margin-right: 1px; letter-spacing: -.15px; }
.current-row { display: flex; align-items: center; gap: 7px; margin: 3px 0 0 13px; }
.entry { width: 113px; height: 31px; padding-left: 5px; border: 1px solid #888; border-radius: 4px; background: #fff; font-size: 16px; line-height: 30px; font-style: italic; }
.position-row { display: flex; align-items: center; justify-content: space-between; margin-top: 5px; letter-spacing: -.05px; }
.px { width: 53px; margin-right: 1px; }
.spin-row { display: flex; gap: 6px; margin: 3px 0 0 13px; }
.spin { width: 76px; height: 28px; flex: none; display: flex; justify-content: space-between; padding: 5px 0 0 5px; border: 1px solid #888; border-radius: 3px; background: #fff; }
.spin em { width: 16px; height: 28px; margin-top: -5px; padding: 4px 0 0 4px; border-left: 1px solid #aaa; background: #f2f2f2; }
.oscroll { width: 13px; flex: none; margin: 24px 0 0 -1px; display: flex; flex-direction: column; justify-content: space-between; align-items: center; background: #d3d3d3; }
.oscroll .thumb { width: 8px; height: 96px; margin: 3px 0 auto; border-radius: 4px; background: #999b9d; }
.option-actions { display: flex; justify-content: space-between; padding: 7px 21px 0 20px; }

.blend-row { display: flex; align-items: center; padding: 4px 7px 0 6px; }
.blend-row > span { width: 38px; letter-spacing: -.1px; }
.dropdown { flex: 1; height: 30px; display: flex; align-items: center; justify-content: space-between; padding: 0 9px 0 5px; border: 1px solid #aaa; border-radius: 3px; background: linear-gradient(#fafafa, #e4e4e4); }
.opacity { margin: 3px 6px 0; height: 40px; display: flex; border: 1px solid #2e3436; background: #fff; color: #fff; }
.opacity div { flex: 1; display: flex; align-items: center; justify-content: space-between; padding: 0 2px 0 1px; background: #4c98f5; }
.opacity em { width: 17px; display: grid; place-items: center; background: #f7f7f7; }
.lock-row { display: flex; align-items: center; gap: 12px; height: 32px; padding: 0 6px; }
.lock-row > span { width: 30px; letter-spacing: -.1px; }
.layer-list { margin: 0 6px; height: 122px; border: 1px solid #aaa; background: #fff; }
.layer { height: 42px; display: flex; align-items: center; padding-left: 6px; }
.layer .thumbnail { margin: 0 4px 0 52px; }
.layer b { font-weight: 700; font-size: 13px; }
.on { background: #4c98f5; color: #fff; }
.layer-actions { height: 38px; display: flex; align-items: center; justify-content: space-between; padding: 0 13px 0 9px; }
```
